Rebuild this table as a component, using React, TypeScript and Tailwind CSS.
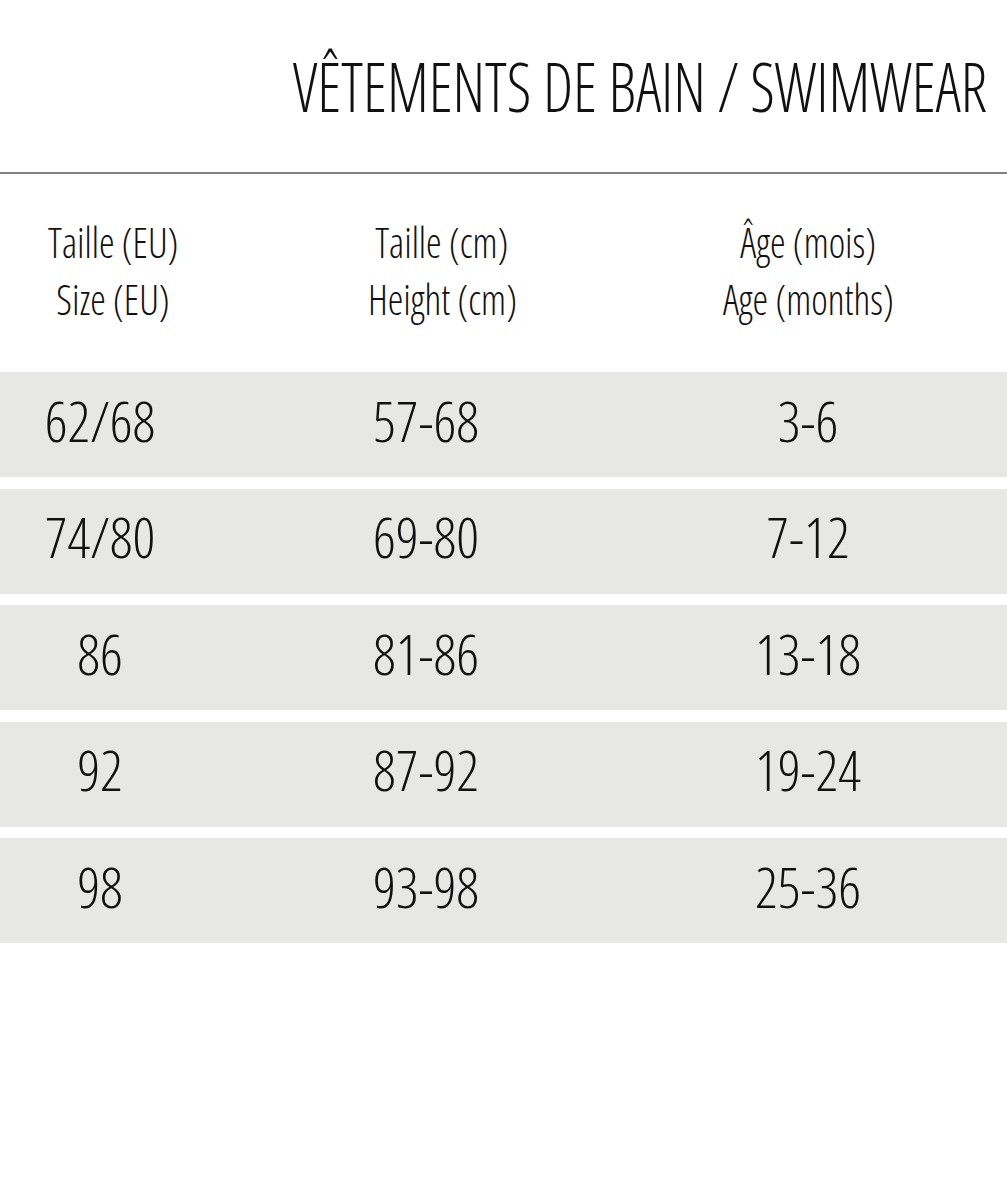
const rows = [
  ["62/68", "57-68", "3-6"],
  ["74/80", "69-80", "7-12"],
  ["86", "81-86", "13-18"],
  ["92", "87-92", "19-24"],
  ["98", "93-98", "25-36"],
];

const headers: [string, string][] = [
  ["Taille (EU)", "Size (EU)"],
  ["Taille (cm)", "Height (cm)"],
  ["Âge (mois)", "Age (months)"],
];

export default function App() {
  return (
    <div className="w-[1007px] h-[1200px] bg-white text-[#111] font-['Open_Sans',sans-serif] font-stretch-condensed">
      <div className="h-[172px] flex items-center justify-end pr-[20px]">
        <span className="inline-block origin-right scale-x-[0.906] text-[68px] font-light leading-none whitespace-nowrap">
          VÊTEMENTS DE BAIN / SWIMWEAR
        </span>
      </div>
      <div className="h-[2px] bg-[#808080]" />
      <div className="h-[198px] grid grid-cols-[226px_432px_300px] items-center">
        {headers.map(([a, b]) => (
          <div key={a} className="flex flex-col items-center text-[43px] font-light leading-[57px] pb-[6px]">
            <span className="inline-block scale-x-[0.915] whitespace-nowrap">{a}</span>
            <span className="inline-block scale-x-[0.915] whitespace-nowrap">{b}</span>
          </div>
        ))}
      </div>
      <div className="flex flex-col gap-[11.5px]">
        {rows.map((r) => (
          <div key={r[0]} className="h-[105px] bg-[#e7e7e5] grid grid-cols-[200px_452px_312px] items-center">
            {r.map((c, i) => (
              <div key={i} className="text-center text-[56px] font-light leading-none pb-[10px]">
                {c}
              </div>
            ))}
          </div>
        ))}
      </div>
    </div>
  );
}
